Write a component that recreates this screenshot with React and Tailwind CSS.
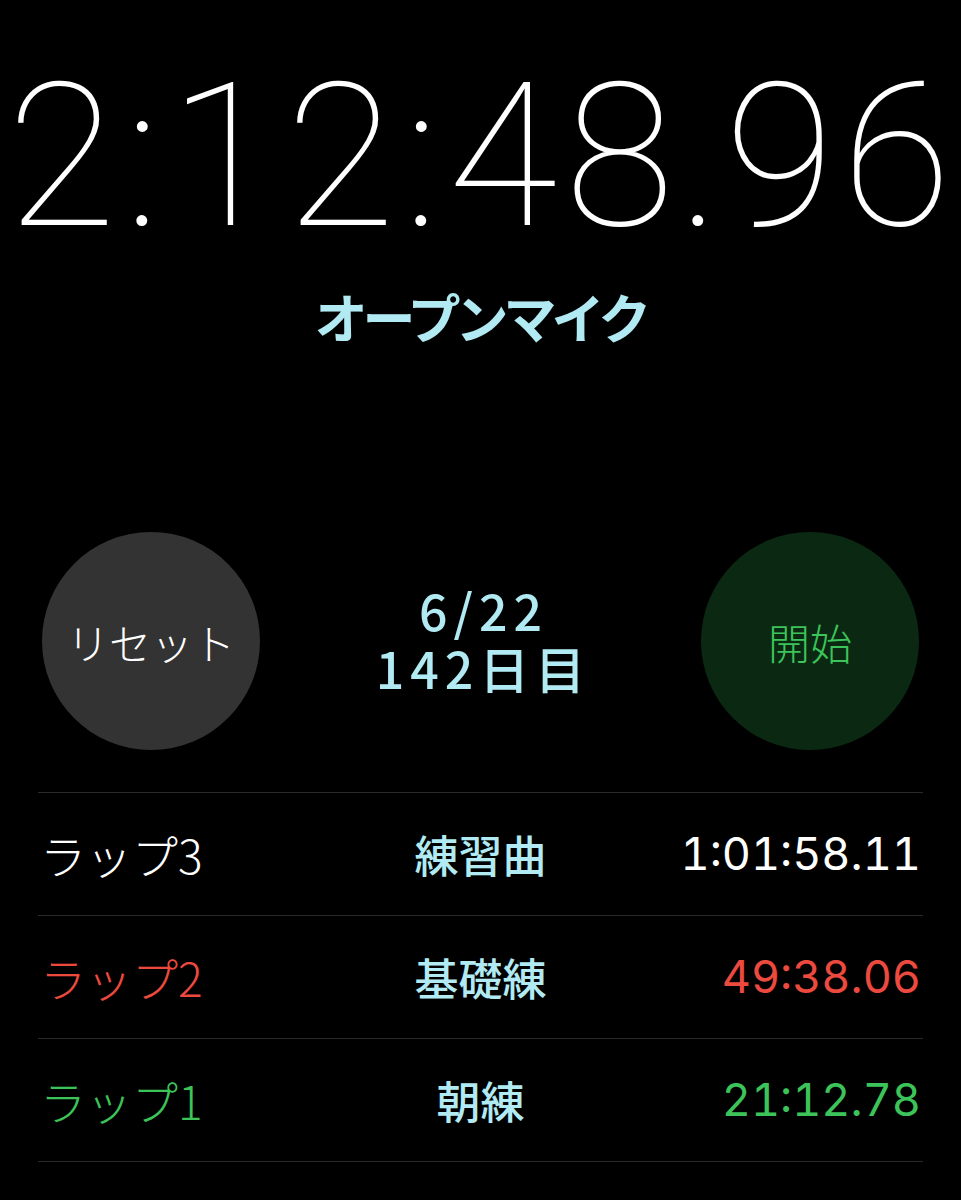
const timer = '2:12:48.96'.split('');

export default function App() {
  const laps = [
    { name: 'ラップ3', label: '練習曲', time: '1:01:58.11', color: 'text-white' },
    { name: 'ラップ2', label: '基礎練', time: '49:38.06', color: 'text-[#ec4a3f]' },
    { name: 'ラップ1', label: '朝練', time: '21:12.78', color: 'text-[#3cc45a]' },
  ];

  return (
    <div className="w-[961px] h-[1200px] bg-black overflow-hidden font-['Noto_Sans_CJK_JP',sans-serif]">
      {/* Main timer, fixed-width slots like tabular figures */}
      <div className="pt-[57px] pl-[3px] flex font-['Roboto',sans-serif] font-thin text-white text-[200px] leading-none">
        {timer.map((ch, i) => (
          <span
            key={i}
            className={`text-center ${ch === ':' ? 'w-[45px]' : ch === '.' ? 'w-[43px]' : 'w-[117px]'}`}
          >
            {ch}
          </span>
        ))}
      </div>

      <div className="mt-[29px] text-center text-[#b1eaf2] text-[53px] font-bold leading-[60px] tracking-[-5px]">
        オープンマイク
      </div>

      {/* Buttons */}
      <div className="mt-[186px] px-[42px] flex items-center justify-between">
        <div className="w-[218px] h-[218px] rounded-full bg-[#333333] flex items-center justify-center">
          <span className="text-white text-[42px] font-light">リセット</span>
        </div>
        <div className="pb-[6px] pl-[6px] text-center text-[#b1eaf2] text-[50px] leading-[58px] font-medium tracking-[6px]">
          <div>6/22</div>
          <div>142日目</div>
        </div>
        <div className="w-[218px] h-[218px] rounded-full bg-[#0b2912] flex items-center justify-center">
          <span className="text-[#3cc45a] text-[42px] font-light">開始</span>
        </div>
      </div>

      {/* Laps */}
      <div className="mt-[42px] mx-[38px] border-t border-[#2a2a2e]">
        {laps.map((lap) => (
          <div
            key={lap.name}
            className="h-[123px] border-b border-[#2a2a2e] grid grid-cols-[1fr_auto_1fr] items-center"
          >
            <div className={`pl-[2px] text-[46px] font-light ${lap.color}`}>{lap.name}</div>
            <div className="text-center text-[#b1eaf2] text-[44px] font-medium">{lap.label}</div>
            <div className={`text-right pr-[2px] font-['Inter',sans-serif] text-[45px] tabular-nums ${lap.color}`}>
              {lap.time}
            </div>
          </div>
        ))}
      </div>
    </div>
  );
}
